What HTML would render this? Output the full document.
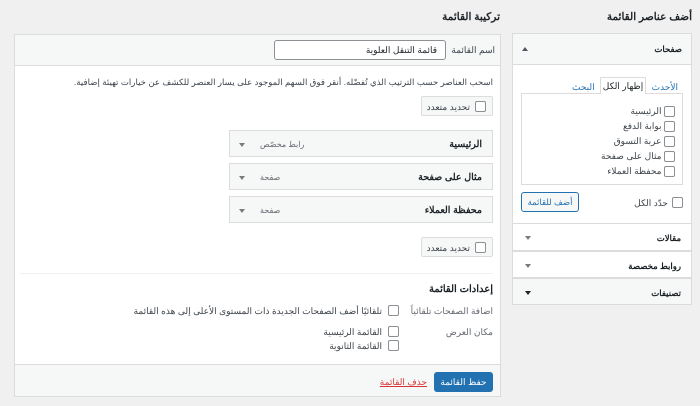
<!DOCTYPE html>
<html dir="rtl"><head><meta charset="utf-8"><style>
*{box-sizing:border-box;margin:0;padding:0}
body{width:700px;height:406px;background:#f0f0f1;font-family:"Liberation Sans","Noto Sans CJK SC",sans-serif;font-size:9px;color:#1d2327;position:relative;overflow:hidden}
.a{position:absolute}
.box{background:#fff;border:1px solid #dcdcde}
.cb{display:inline-block;width:11px;height:11px;border:1px solid #8c8f94;border-radius:2px;background:#fff;vertical-align:middle}
.item{position:absolute;left:229px;width:264px;height:27px;background:#f6f7f7;border:1px solid #dcdcde}
.item b{position:absolute;right:10px;top:8px;font-size:9.5px}
.item i{position:absolute;left:30px;top:9px;font-style:normal;color:#646970;font-size:8px}
.tri{position:absolute;width:0;height:0;border-left:3px solid transparent;border-right:3px solid transparent;border-top:4px solid #787c82}
.bulk{position:absolute;left:421px;width:72px;height:20px;background:#f6f7f7;border:1px solid #dcdcde;border-radius:2px}
.bulk .cb{position:absolute;right:6px;top:4px}
.bulk span{position:absolute;right:22px;top:5px;color:#3c434a}
.sec{position:absolute;left:512px;width:180px;border:1px solid #dcdcde;border-top:none;background:#fff}
.sec b{position:absolute;right:10px;top:9px;font-size:8.5px}
</style></head><body>
<div class="a" style="right:8px;top:11px;font-size:10.5px;font-weight:600">أضف عناصر القائمة</div>
<div class="a" style="right:200px;top:11px;font-size:10.5px;font-weight:600">تركيبة القائمة</div>

<!-- left panel -->
<div class="a box" style="left:14px;top:34px;width:487px;height:363px"></div>
<div class="a" style="left:15px;top:35px;width:485px;height:31px;background:#f6f7f7;border-bottom:1px solid #dcdcde"></div>
<div class="a" style="right:205px;top:45px;color:#3c434a">اسم القائمة</div>
<div class="a" style="left:274px;top:40px;width:172px;height:20px;background:#fff;border:1px solid #8c8f94;border-radius:3px"><span class="a" style="right:8px;top:4px;font-size:9px">قائمة التنقل العلوية</span></div>
<div class="a" style="right:207px;top:77px;color:#3c434a;white-space:nowrap;font-size:8.6px">اسحب العناصر حسب الترتيب الذي تُفضّله. أنقر فوق السهم الموجود على يسار العنصر للكشف عن خيارات تهيئة إضافية.</div>
<div class="bulk" style="top:96px"><span class="cb"></span><span>تحديد متعدد</span></div>
<div class="item" style="top:130px"><b>الرئيسية</b><i>رابط مخصّص</i><div class="tri" style="left:9px;top:12px"></div></div>
<div class="item" style="top:163px"><b>مثال على صفحة</b><i>صفحة</i><div class="tri" style="left:9px;top:12px"></div></div>
<div class="item" style="top:196px"><b>محفظة العملاء</b><i>صفحة</i><div class="tri" style="left:9px;top:12px"></div></div>
<div class="bulk" style="top:237px"><span class="cb"></span><span>تحديد متعدد</span></div>
<div class="a" style="left:20px;top:273px;width:473px;height:1px;background:#f0f0f1"></div>
<div class="a" style="right:207px;top:284px;font-size:10px;font-weight:600">إعدادات القائمة</div>
<div class="a" style="right:207px;top:306px;color:#646970">اضافة الصفحات تلقائياً</div>
<div class="a" style="right:301px;top:305px"><span class="cb"></span></div>
<div class="a" style="right:318px;top:306px;color:#3c434a;white-space:nowrap">تلقائيًا أضف الصفحات الجديدة ذات المستوى الأعلى إلى هذه القائمة</div>
<div class="a" style="right:207px;top:327px;color:#646970">مكان العرض</div>
<div class="a" style="right:301px;top:326px"><span class="cb"></span></div>
<div class="a" style="right:318px;top:327px;color:#3c434a">القائمة الرئيسية</div>
<div class="a" style="right:301px;top:340px"><span class="cb"></span></div>
<div class="a" style="right:318px;top:341px;color:#3c434a">القائمة الثانوية</div>
<div class="a" style="left:15px;top:364px;width:485px;height:32px;background:#f6f7f7;border-top:1px solid #dcdcde"></div>
<div class="a" style="left:434px;top:372px;width:59px;height:20px;background:#2271b1;border-radius:3px;color:#fff;text-align:center;line-height:20px">حفظ القائمة</div>
<div class="a" style="right:273px;top:377px;color:#d63638;text-decoration:underline">حذف القائمة</div>

<!-- right panel -->
<div class="a box" style="left:512px;top:33px;width:180px;height:191px"></div>
<div class="a" style="left:513px;top:34px;width:178px;height:31px;background:#f6f7f7;border-bottom:1px solid #dcdcde"></div>
<div class="a" style="right:18px;top:44px;font-size:8.5px;font-weight:600">صفحات</div>
<div class="a" style="left:522px;top:47px;width:0;height:0;border-left:3px solid transparent;border-right:3px solid transparent;border-bottom:4px solid #50575e"></div>
<div class="a" style="right:22px;top:82px;color:#2271b1">الأحدث</div>
<div class="a" style="left:600px;top:77px;width:46px;height:17px;background:#fff;border:1px solid #dcdcde;border-bottom:none;z-index:2;text-align:center;line-height:16px">إظهار الكل</div>
<div class="a" style="left:572px;top:82px;color:#2271b1">البحث</div>
<div class="a" style="left:521px;top:93px;width:162px;height:92px;border:1px solid #dcdcde;background:#fff"></div>
<div class="a" style="right:25px;top:104px;line-height:15px;text-align:right;color:#3c434a">
<div><span class="cb"></span> الرئيسية</div>
<div><span class="cb"></span> بوابة الدفع</div>
<div><span class="cb"></span> عربة التسوق</div>
<div><span class="cb"></span> مثال على صفحة</div>
<div><span class="cb"></span> محفظة العملاء</div>
</div>
<div class="a" style="right:17px;top:197px"><span class="cb"></span></div>
<div class="a" style="right:32px;top:198px;color:#3c434a">حدّد الكل</div>
<div class="a" style="left:521px;top:192px;width:58px;height:20px;border:1px solid #2271b1;border-radius:3px;background:#f6f7f7;color:#2271b1;text-align:center;line-height:18px;font-size:8.5px">أضف للقائمة</div>
<div class="sec" style="top:223px;height:28px;border-top:1px solid #dcdcde"><b>مقالات</b><div class="tri" style="left:12px;top:12px"></div></div>
<div class="sec" style="top:251px;height:27px;border-top:1px solid #dcdcde"><b>روابط مخصصة</b><div class="tri" style="left:12px;top:12px"></div></div>
<div class="sec" style="top:278px;height:27px;border-top:1px solid #dcdcde;background:#f6f7f7"><b>تصنيفات</b><div class="tri" style="left:12px;top:12px;border-top-color:#1d2327"></div></div>
</body></html>
